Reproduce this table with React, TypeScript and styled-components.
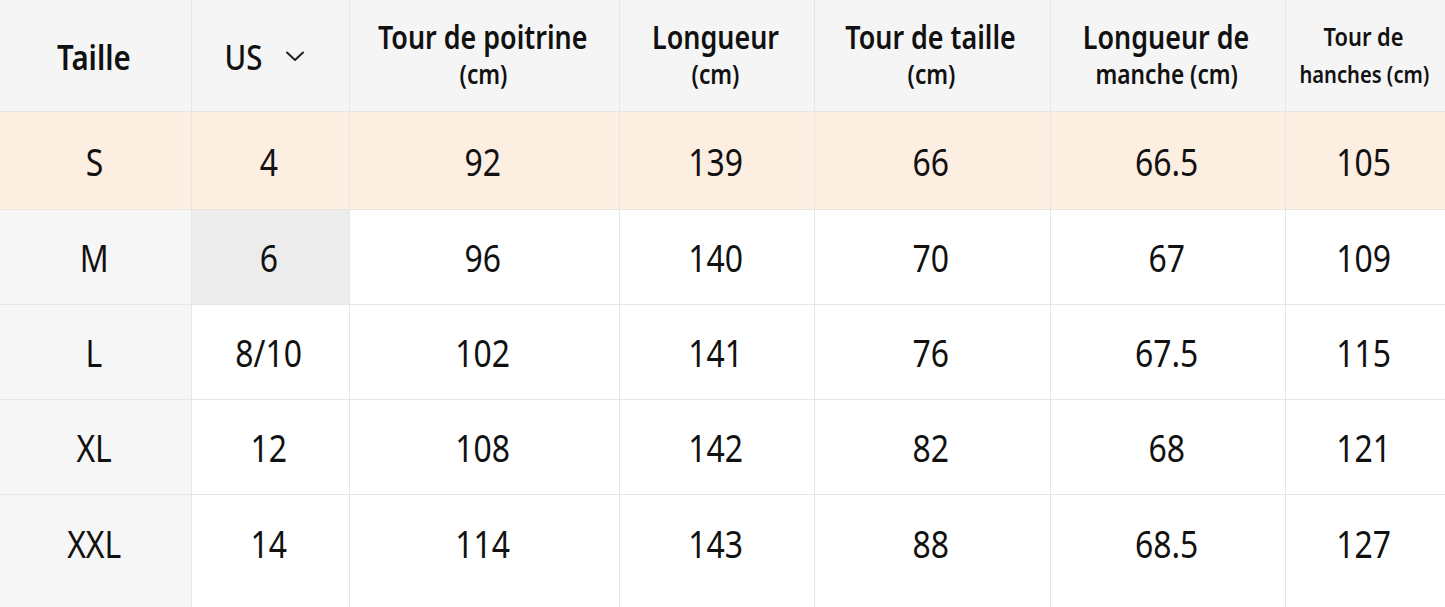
import React from "react";
import styled, { createGlobalStyle, css } from "styled-components";

const Global = createGlobalStyle`
  html, body { margin: 0; padding: 0; background: #ffffff; }
  body { font-family: "Noto Sans", "Open Sans", sans-serif; color: #111111; }
`;

const Grid = styled.div`
  display: grid;
  grid-template-columns: 192px 158px 270px 195px 236px 235px 1fr;
  grid-template-rows: 112px 98px 95px 95px 95px 112px;
  width: 1445px;
  height: 607px;
  overflow: hidden;
`;

type CellProps = { $tone?: "head" | "side" | "peach" | "active" | "plain"; $lastCol?: boolean; $lastRow?: boolean };

const toneBg: Record<string, string> = {
  head: "#f5f5f5",
  side: "#f6f6f6",
  peach: "#fdeee2",
  active: "#ececec",
  plain: "#ffffff",
};

const Cell = styled.div<CellProps>`
  box-sizing: border-box;
  display: flex;
  align-items: center;
  justify-content: center;
  background: ${(p) => toneBg[p.$tone || "plain"]};
  border-right: ${(p) => (p.$lastCol ? "none" : "1px solid #e6e6e6")};
  border-bottom: ${(p) => (p.$lastRow ? "none" : "1px solid #e6e6e6")};
  padding-bottom: ${(p) => (p.$lastRow ? "17px" : "0")};
  padding-right: 3px;
  text-align: center;
`;

const HeadCell = styled(Cell)`
  flex-direction: column;
`;

const Squeeze = css`
  display: inline-block;
  transform: scaleX(0.84);
  transform-origin: center;
  white-space: nowrap;
`;

const TitleMain = styled.span<{ $size?: number }>`
  ${Squeeze};
  font-size: ${(p) => p.$size || 32}px;
  line-height: 37px;
  font-weight: 600;
  color: #111;
`;

const TitleSub = styled.span<{ $size?: number }>`
  ${Squeeze};
  font-size: ${(p) => p.$size || 27}px;
  line-height: 38px;
  font-weight: 600;
  color: #111;
`;

const BigHead = styled.span<{ $weight?: number }>`
  ${Squeeze};
  font-size: 35px;
  line-height: 40px;
  font-weight: ${(p) => p.$weight || 600};
  color: #111;
  margin-top: 2px;
`;

const UnitToggle = styled.div`
  display: flex;
  align-items: center;
  gap: 18px;
  margin-left: -12px;
`;

const Value = styled.span`
  ${Squeeze};
  font-size: 38px;
  line-height: 44px;
  font-weight: 400;
  color: #111;
`;

const Chevron = () => (
  <svg width="20" height="12" viewBox="0 0 20 12" fill="none">
    <path d="M2 2.5 L10 10 L18 2.5" stroke="#222" strokeWidth="2" strokeLinecap="round" strokeLinejoin="round" />
  </svg>
);

const headers: { main: string; sub: string; mainSize?: number; subSize?: number }[] = [
  { main: "Tour de poitrine", sub: "(cm)" },
  { main: "Longueur", sub: "(cm)" },
  { main: "Tour de taille", sub: "(cm)" },
  { main: "Longueur de", sub: "manche (cm)" },
  { main: "Tour de", sub: "hanches (cm)", mainSize: 26, subSize: 24 },
];

const rows: string[][] = [
  ["S", "4", "92", "139", "66", "66.5", "105"],
  ["M", "6", "96", "140", "70", "67", "109"],
  ["L", "8/10", "102", "141", "76", "67.5", "115"],
  ["XL", "12", "108", "142", "82", "68", "121"],
  ["XXL", "14", "114", "143", "88", "68.5", "127"],
];

export default function App() {
  return (
    <>
      <Global />
      <Grid>
        <HeadCell $tone="head">
          <BigHead>Taille</BigHead>
        </HeadCell>
        <HeadCell $tone="head">
          <UnitToggle>
            <BigHead $weight={500}>US</BigHead>
            <Chevron />
          </UnitToggle>
        </HeadCell>
        {headers.map((h, i) => (
          <HeadCell key={h.main} $tone="head" $lastCol={i === headers.length - 1}>
            <TitleMain $size={h.mainSize}>{h.main}</TitleMain>
            <TitleSub $size={h.subSize}>{h.sub}</TitleSub>
          </HeadCell>
        ))}
        {rows.map((r, ri) =>
          r.map((v, ci) => {
            let tone: CellProps["$tone"] = "plain";
            if (ri === 0) tone = "peach";
            else if (ci === 0) tone = "side";
            else if (ri === 1 && ci === 1) tone = "active";
            return (
              <Cell
                key={`${ri}-${ci}`}
                $tone={tone}
                $lastCol={ci === r.length - 1}
                $lastRow={ri === rows.length - 1}
              >
                <Value>{v}</Value>
              </Cell>
            );
          })
        )}
      </Grid>
    </>
  );
}
